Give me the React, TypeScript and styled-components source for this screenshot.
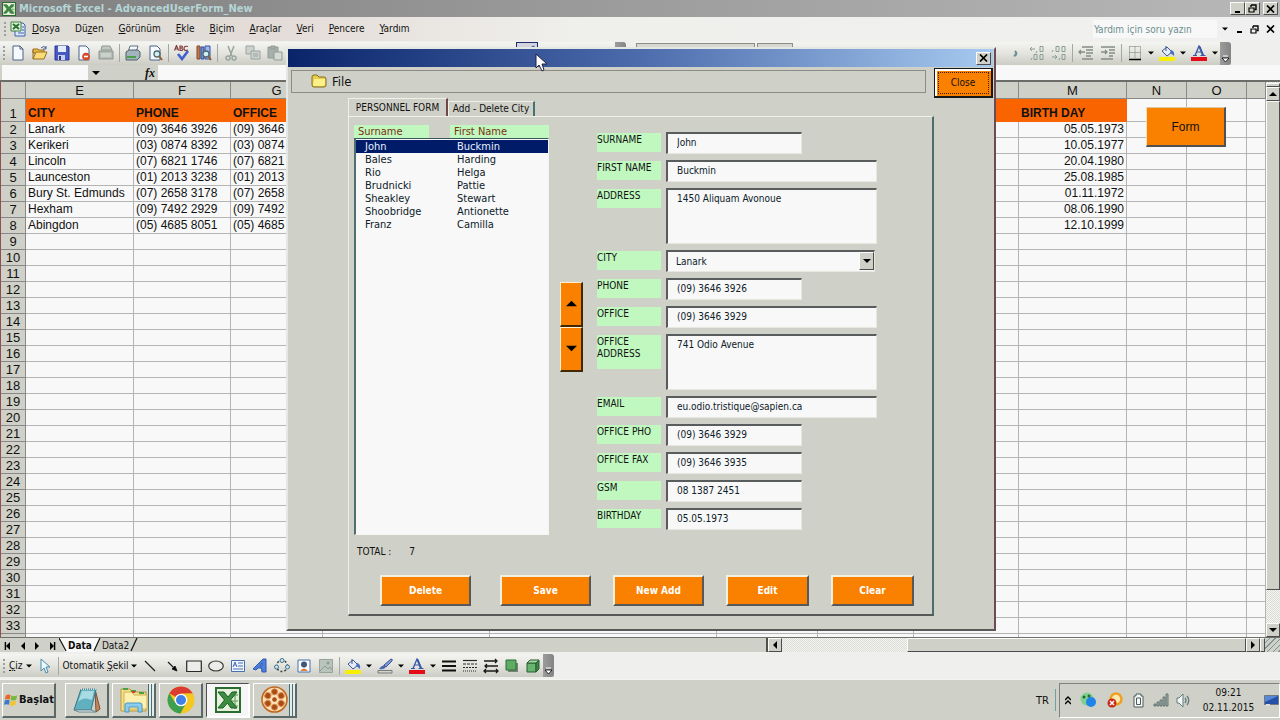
import React from "react";
import styled, { createGlobalStyle, css } from "styled-components";

const ui = `"DejaVu Sans Condensed", "Noto Sans", sans-serif`;
const face = "#cfd0c7";
const orange = "#fa8000";
const mint = "#c0f8c0";

const GlobalStyle = createGlobalStyle`
  * { box-sizing: border-box; }
  body { margin: 0; font-family: ${ui}; font-size: 10px; color: #111; background: ${face}; }
  button, input, select, textarea { font: inherit; color: inherit; margin: 0; }
  button { padding: 0; cursor: default; }
`;

const raised = css`
  border: 1px solid;
  border-color: #fbfbf8 #4c4c4c #4c4c4c #fbfbf8;
`;

const Desktop = styled.div`
  position: relative;
  display: flex;
  flex-direction: column;
  height: 100vh;
  min-height: 660px;
  overflow: hidden;
`;

/* ---------- application chrome ---------- */

const TitleBar = styled.header`
  display: flex;
  align-items: center;
  gap: 3px;
  height: 17px;
  flex: none;
  padding: 0 2px;
  background: linear-gradient(90deg, #808080, #9a9a9a 45%, #b8b8b8);
`;

const AppTitle = styled.h1`
  flex: 1;
  margin: 0;
  font-size: 11px;
  line-height: 16px;
  color: #b4d6d6;
`;

const CaptionButtons = styled.div`
  display: flex;
`;

const CaptionButton = styled.button<{ $apart?: boolean }>`
  ${raised}
  display: grid;
  place-items: center;
  width: 15px;
  height: 13px;
  margin-left: ${(p) => (p.$apart ? "3px" : "0")};
  background: ${face};
`;

const MenuBar = styled.nav`
  display: flex;
  align-items: center;
  gap: 15px;
  height: 24px;
  flex: none;
  padding: 0 2px 0 4px;
  background: linear-gradient(90deg, #dcdcd4, #e4dcd8 22%, #efefec 45%, #f0f0f0);
`;

const DocMark = styled.span`
  display: flex;
  align-items: center;
  gap: 2px;
  margin-right: -9px;
`;

const MenuItem = styled.button`
  border: 0;
  background: none;
  line-height: 16px;
  u { text-underline-offset: 1px; }
`;

const MenuEnd = styled.div`
  display: flex;
  align-items: center;
  margin-left: auto;
`;

const HelpBox = styled.input`
  width: 124px;
  height: 18px;
  border: 0;
  padding: 0 1px;
  background: #f8f8f8;
  &::placeholder { color: #6d8f8f; opacity: 1; }
`;

const PlainButton = styled.button<{ $w: number }>`
  display: grid;
  place-items: center;
  width: ${(p) => p.$w}px;
  height: 16px;
  border: 0;
  background: none;
`;

const Toolbar = styled.div<{ $tall?: boolean }>`
  display: flex;
  align-items: center;
  flex: none;
  height: ${(p) => (p.$tall ? 27 : 24)}px;
  background: #efefed;
`;

const ToolStrip = styled.div<{ $w?: number; $end?: boolean }>`
  display: flex;
  align-items: center;
  height: 23px;
  width: ${(p) => (p.$w ? `${p.$w}px` : "auto")};
  padding-left: ${(p) => (p.$end ? 0 : 3)}px;
  background: linear-gradient(#f4f4f1, #e4e4de 50%, #cbccc4);
`;

const Grip = styled.i`
  width: 4px;
  height: 14px;
  background: repeating-linear-gradient(#98a0a0 0 2px, transparent 2px 4px) 0 0 / 2px 100% no-repeat;
`;

const Tool = styled.button<{ $w?: number; $on?: boolean }>`
  display: grid;
  place-items: center;
  flex: none;
  width: ${(p) => p.$w ?? 22}px;
  height: 22px;
  border: 1px solid ${(p) => (p.$on ? "#1c2c6c" : "transparent")};
  background: ${(p) => (p.$on ? "#d4d4e0" : "none")};
`;

const TextTool = styled(Tool)`
  display: flex;
  align-items: center;
  gap: 3px;
  width: auto;
  padding: 0 1px;
`;

const Divider = styled.i`
  flex: none;
  width: 5px;
  height: 18px;
  border-left: 1px solid #a4a8a4;
  margin-left: 2px;
  margin-right: -2px;
`;

const Overflow = styled.button`
  display: grid;
  place-items: end center;
  flex: none;
  width: 11px;
  height: 23px;
  padding-bottom: 2px;
  border: 0;
  border-radius: 0 3px 3px 0;
  background: linear-gradient(90deg, #9c9c9c, #848484);
`;

const Gap = styled.i<{ $w: number }>`
  flex: none;
  width: ${(p) => p.$w}px;
`;

const ComboStub = styled.i<{ $w: number }>`
  flex: none;
  width: ${(p) => p.$w}px;
  height: 20px;
  margin-right: 2px;
  border: 1px solid #8c8c88;
  background: #d8d8d0;
`;

const FormulaBar = styled.div`
  display: flex;
  align-items: center;
  flex: none;
  height: 17px;
  padding-left: 2px;
  border-bottom: 2px solid #6c6c68;
  background: ${face};
`;

const NameBox = styled.input`
  width: 86px;
  height: 15px;
  border: 0;
  background: #f8f8f8;
`;

const FormulaInput = styled.input`
  flex: 1;
  height: 15px;
  border: 0;
  background: #f8f8f8;
`;

const Fx = styled.button`
  width: 54px;
  border: 0;
  padding-left: 38px;
  background: none;
  font: italic bold 12px/14px "Liberation Serif", serif;
`;

/* ---------- worksheet ---------- */

const SheetArea = styled.main`
  position: relative;
  display: flex;
  flex: 1;
  min-height: 0;
  overflow: hidden;
  background: #f8f8f8;
`;

const GridView = styled.div`
  flex: 1;
  min-width: 0;
  overflow: hidden;
`;

const Sheet = styled.table`
  table-layout: fixed;
  width: 100%;
  border-collapse: separate;
  border-spacing: 0;
  border-left: 1px solid #905050;
  font: 12px/15px "Liberation Sans", Arial, sans-serif;
  th, td {
    height: 16px;
    padding: 0 2px;
    border-right: 1px solid #b4b4b4;
    border-bottom: 1px solid #b4b4b4;
    overflow: hidden;
    white-space: nowrap;
  }
  thead th, tbody th {
    padding: 0;
    border-color: #888;
    background: ${face};
    font-size: 13px;
    font-weight: normal;
    text-align: center;
  }
  thead th { height: 17px; }
`;

const HeadCell = styled.td`
  && {
    height: 23px;
    border-color: #fa6400;
    background: #fa6400;
    font-weight: bold;
    vertical-align: bottom;
  }
`;

const RowLabel = styled.th`
  vertical-align: bottom;
`;

const Cell = styled.td<{ $right?: boolean }>`
  text-align: ${(p) => (p.$right ? "right" : "left")};
`;

const FormLauncher = styled.button`
  position: absolute;
  top: 25px;
  left: 1146px;
  width: 80px;
  height: 40px;
  border: 1px solid;
  border-color: #d8c8a0 #505050 #505050 #f0e0c0;
  border-width: 1px 2px 2px 1px;
  background: ${orange};
  font: 12px "Liberation Sans", Arial, sans-serif;
`;

const dither = css`
  background: repeating-conic-gradient(#f4f4f2 0 25%, #dcdcd6 0 50%) 0 0 / 2px 2px;
`;

const VScroll = styled.div`
  display: flex;
  flex-direction: column;
  width: 14px;
  padding-top: 1px;
  ${dither}
`;

const SplitBox = styled.i<{ $vertical?: boolean }>`
  ${raised}
  flex: none;
  background: ${face};
  width: ${(p) => (p.$vertical ? "5px" : "14px")};
  height: ${(p) => (p.$vertical ? "14px" : "4px")};
`;

const SizeGrip = styled.i`
  flex: none;
  width: 15px;
  background: repeating-linear-gradient(135deg, ${face} 0 3px, #7c9494 3px 4px);
`;

const ScrollButton = styled.button`
  ${raised}
  display: grid;
  place-items: center;
  flex: none;
  width: 14px;
  height: 14px;
  background: ${face};
`;

const Thumb = styled.i<{ $grow: number }>`
  ${raised}
  flex: ${(p) => p.$grow} 1 0;
  background: ${face};
`;

const Track = styled.i<{ $grow: number }>`
  flex: ${(p) => p.$grow} 1 0;
`;

const TabBar = styled.div`
  display: flex;
  align-items: stretch;
  flex: none;
  height: 15px;
  border-top: 1px solid #70706c;
  background: ${face};
`;

const TabNav = styled.div`
  display: flex;
  width: 59px;
  padding-left: 1px;
`;

const SheetTab = styled.button<{ $active?: boolean }>`
  border: 0;
  padding: 0 1px;
  background: ${(p) => (p.$active ? "#f8f8f8" : face)};
  font-weight: ${(p) => (p.$active ? "bold" : "normal")};
  line-height: 13px;
`;

const HScroll = styled.div`
  display: flex;
  flex: none;
  width: 40%;
  margin-left: auto;
  ${dither}
`;

const TabFill = styled.i`
  flex: 1;
  border-right: 2px solid #50504c;
`;

/* ---------- task bar ---------- */

const TaskBar = styled.footer`
  display: flex;
  align-items: center;
  gap: 3px;
  flex: none;
  height: 41px;
  padding: 0 0 0 2px;
  border-top: 1px solid #f4f4f0;
  background: ${face};
`;

const TaskButton = styled.button<{ $active?: boolean; $stack?: boolean }>`
  display: grid;
  place-items: center;
  width: 44px;
  height: 35px;
  border: 1px solid;
  border-width: 1px 2px 2px 1px;
  border-color: ${(p) => (p.$active ? "#505050 #fff #fff #505050" : "#fff #5c6868 #5c6868 #fff")};
  background: ${(p) => (p.$active ? "#f6f6f6" : face)};
  box-shadow: ${(p) => (p.$stack ? "inset -2px 0 #e4ecec, inset -3px 0 #487070, inset -5px 0 #e4ecec, inset -6px 0 #487070" : "none")};
`;

const StartButton = styled(TaskButton)`
  display: flex;
  align-items: center;
  gap: 1px;
  width: 54px;
  margin-right: 6px;
  padding-left: 1px;
  font-size: 11px;
  font-weight: bold;
`;

const Language = styled.button`
  margin-left: auto;
  width: 22px;
  height: 22px;
  border: 0;
  border-right: 1px solid #70a0a0;
  background: none;
  padding-right: 4px;
  font-size: 11px;
`;

const Tray = styled.div`
  display: flex;
  align-items: center;
  height: 35px;
  width: 221px;
  padding-left: 3px;
  border: 1px solid;
  border-color: #80807c #fff #fff #80807c;
`;

const TrayIcon = styled.button<{ $w: number }>`
  display: grid;
  place-items: center;
  width: ${(p) => p.$w}px;
  height: 24px;
  border: 0;
  background: none;
`;

const Clock = styled.time`
  flex: 1;
  line-height: 15px;
  text-align: center;
`;

/* ---------- personnel dialog ---------- */

const Dialog = styled.section`
  position: absolute;
  top: 47px;
  left: 286px;
  display: flex;
  flex-direction: column;
  width: 710px;
  height: 584px;
  border: 2px solid;
  border-color: #e4e8e4 #6c4c54 #585858 #e4e8e4;
  background: ${face};
`;

const DialogTitle = styled.div`
  display: flex;
  align-items: center;
  justify-content: flex-end;
  height: 18px;
  margin-right: 1px;
  padding-right: 2px;
  background: linear-gradient(90deg, #0a246a, #4c6cac 50%, #a6caf0);
`;

const DialogTop = styled.div`
  display: flex;
  align-items: flex-start;
  justify-content: space-between;
  padding: 1px 1px 0 3px;
`;

const FileMenu = styled.div`
  width: 635px;
  height: 23px;
  margin-top: 2px;
  padding-left: 19px;
  border: 1px solid #8c8c84;
`;

const FileButton = styled.button`
  display: flex;
  align-items: center;
  gap: 5px;
  height: 20px;
  border: 0;
  background: none;
  font-size: 13px;
`;

const CloseButton = styled.button`
  width: 59px;
  height: 30px;
  border: 2px solid #181818;
  border-width: 1px 2px 2px 1px;
  box-shadow: inset 1px 1px #fff, inset 2px 2px #fff;
  background: ${orange};
  outline: 1px dotted #402000;
  outline-offset: -5px;
`;

const Tabs = styled.div`
  display: flex;
  align-items: flex-end;
  height: 18px;
  margin-left: 60px;
`;

const Tab = styled.button<{ $active?: boolean }>`
  height: ${(p) => (p.$active ? 18 : 15)}px;
  width: ${(p) => (p.$active ? 100 : 87)}px;
  border: 1px solid;
  border-width: 1px 2px 0 1px;
  border-color: #f0f0e8 ${(p) => (p.$active ? "#704848" : "#487070")} transparent #f0f0e8;
  background: ${face};
  line-height: 14px;
  white-space: nowrap;
`;

const Page = styled.div`
  width: 586px;
  margin-left: 60px;
  height: 500px;
  padding: 8px 5px 0;
  border: 1px solid;
  border-width: 1px 2px 2px 1px;
  border-color: #f0f0e8 #4c6c6c #585858 #f0f0e8;
`;

const Columns = styled.div`
  display: flex;
  align-items: flex-start;
`;

const ListPane = styled.div`
  width: 195px;
  font-size: 11px;
`;

const ListHeads = styled.div`
  display: flex;
  justify-content: space-between;
`;

const ListHead = styled.span<{ $w: number }>`
  width: ${(p) => p.$w}px;
  height: 13px;
  padding-left: 4px;
  background: ${mint};
  color: #7c3010;
  line-height: 13px;
`;

const ListBox = styled.div`
  height: 397px;
  padding-top: 1px;
  border: 1px solid;
  border-width: 1px 1px 1px 2px;
  border-color: #385858 #f4f4f0 #f4f4f0 #507070;
  background: #f8f8f8;
`;

const ListTable = styled.table`
  width: 100%;
  border-collapse: collapse;
  table-layout: fixed;
  line-height: 13px;
  td { height: 13px; padding: 0 0 0 9px; }
`;

const ListRow = styled.tr<{ $selected?: boolean }>`
  background: ${(p) => (p.$selected ? "#001c68" : "none")};
  color: ${(p) => (p.$selected ? "#e8f0ff" : "#0c2028")};
`;

const Total = styled.p`
  display: flex;
  gap: 18px;
  margin: 0;
  padding: 10px 0 0 3px;
  font-size: 10px;
  line-height: 14px;
`;

const Spinner = styled.div`
  display: flex;
  flex-direction: column;
  margin: 157px 14px 0 11px;
`;

const SpinButton = styled.button`
  width: 23px;
  height: 45px;
  border: 1px solid;
  border-width: 1px 2px 2px 1px;
  border-color: #fff0d0 #402800 #402800 #fff0d0;
  background: ${orange};
`;

const Fields = styled.div`
  display: flex;
  flex-direction: column;
  gap: 6px;
  padding-top: 7px;
`;

const FieldRow = styled.div`
  display: flex;
  align-items: flex-start;
  gap: 5px;
`;

const FieldLabel = styled.label<{ $tall?: boolean }>`
  width: 64px;
  height: ${(p) => (p.$tall ? 34 : 19)}px;
  margin-top: 1px;
  padding-top: 1px;
  background: ${mint};
  line-height: 12px;
  white-space: pre-line;
`;

const sunken = css`
  border: 1px solid;
  border-width: 2px 1px 1px 2px;
  border-color: #585c5c #e8e8e0 #e8e8e0 #585c5c;
  background: #f8f8f8;
  color: #0c2028;
  outline: 0;
`;

const TextField = styled.input<{ $wide?: boolean }>`
  ${sunken}
  width: ${(p) => (p.$wide ? 211 : 136)}px;
  height: 22px;
  padding: 0 8px 2px 9px;
`;

const TextArea = styled.textarea`
  ${sunken}
  display: block;
  width: 211px;
  height: 56px;
  padding: 2px 8px 2px 9px;
  line-height: 14px;
  resize: none;
`;

const Combo = styled.div`
  display: grid;
  width: 209px;
  > * { grid-area: 1 / 1; }
`;

const ComboSelect = styled.select`
  ${sunken}
  appearance: none;
  height: 22px;
  padding: 0 8px 1px;
  border-radius: 0;
`;

const ComboArrow = styled.span`
  ${raised}
  display: grid;
  place-items: center;
  place-self: center end;
  width: 15px;
  height: 18px;
  margin-right: 1px;
  background: ${face};
  pointer-events: none;
`;

const Actions = styled.div`
  display: flex;
  gap: 22px;
  padding: 16px 0 0 26px;
`;

const Action = styled.button<{ $narrow?: boolean; $apart?: boolean }>`
  width: ${(p) => (p.$narrow ? 83 : 91)}px;
  height: 31px;
  margin-right: ${(p) => (p.$apart ? 7 : 0)}px;
  border: 2px solid;
  border-color: #f4f0e0 #585858 #585858 #f4f0e0;
  background: ${orange};
  color: #fff;
  font-weight: bold;
`;

const Pointer = styled.svg`
  position: absolute;
  top: 53px;
  left: 535px;
`;

/* ---------- drawings ---------- */

type DirProps = { dir: "up" | "down" | "left" | "right"; size?: number; bar?: boolean };

const Arrow = ({ dir, size = 8, bar }: DirProps) => {
  const turn = { down: 0, left: 90, up: 180, right: 270 }[dir];
  return (
    <svg width={size} height={size} viewBox="0 0 8 8" aria-hidden="true">
      <g transform={`rotate(${turn} 4 4)`}>
        <path d="M0 2h8L4 6z" fill="#000" />
        {bar && <path d="M0 6.600h8" stroke="#000" strokeWidth="1.400" />}
      </g>
    </svg>
  );
};

const Cross = () => (
  <svg width="9" height="8" viewBox="0 0 9 8"><path d="M1 0.500l7 7M8 0.500l-7 7" stroke="#000" strokeWidth="1.700" /></svg>
);
const Minimize = () => (
  <svg width="8" height="8" viewBox="0 0 8 8"><path d="M1 7h5" stroke="#000" strokeWidth="2" /></svg>
);
const Restore = () => (
  <svg width="9" height="9" viewBox="0 0 9 9" fill="none" stroke="#000">
    <path d="M3 1h5v4.500H6.500M3 1v2" strokeWidth="1.400" /><path d="M1 4h5v4H1z" strokeWidth="1.200" />
  </svg>
);

const ExcelMark = ({ size = 15 }: { size?: number }) => (
  <svg width={size} height={size} viewBox="0 0 26 26">
    <path d="M1 1h24v24H1z" fill="#e4f0dc" stroke="#2c6c30" strokeWidth="2" />
    <path d="M20 4v18M14 19h9M15 14h8M17 8h6" stroke="#7cb070" strokeWidth="1.500" />
    <path d="M3 5h6l4 5 4-5h5l-6.500 8L22 21h-6l-3.500-5L8 21H3l6.500-8z" fill="#3c8c40" stroke="#1c5c28" />
  </svg>
);

const SheetIcon = () => (
  <svg width="16" height="16" viewBox="0 0 16 16">
    <path d="M5 2h8l2 2v11H5z" fill="#dce8fc" stroke="#4060a8" />
    <path d="M8 12h6M12 9h2M12 6h2" stroke="#4060a8" />
    <path d="M1 1h10v9H1z" fill="#e0f0d8" stroke="#388040" /><path d="M3 3l6 5M9 3L3 8" stroke="#287030" strokeWidth="2" />
  </svg>
);

type Glyph =
  | "new" | "open" | "save" | "perm" | "mail" | "print" | "preview" | "spell" | "research" | "cut" | "copy" | "paste"
  | "comma" | "incDec" | "decDec" | "outdent" | "indent" | "borders" | "fill" | "fontColor" | "brush"
  | "select" | "line" | "arrow" | "rect" | "oval" | "textbox" | "wordart" | "cycle" | "clip" | "picture"
  | "lines" | "dashes" | "arrows" | "shadow" | "cube";

const page = <path d="M3 1h7l3 3v11H3z" fill="#f6faff" stroke="#4c6088" />;
const lens = (
  <>
    <circle cx="10" cy="9" r="3" fill="#d0f0f4" stroke="#50686c" strokeWidth="1.300" />
    <path d="M12 11l3 4" stroke="#906030" strokeWidth="2" />
  </>
);

const glyphs: Record<Glyph, React.ReactNode> = {
  new: <>{page}<path d="M10 1v3h3" fill="none" stroke="#4c6088" /></>,
  open: <><path d="M1 4h5l1 1h5v3H1z" fill="#e8b848" stroke="#98701c" /><path d="M1 14V5M1 14l3-7h11l-3 7z" fill="#fcdc78" stroke="#98701c" /><path d="M9 3q3-3 5 0m0-2v3h-3" fill="none" stroke="#405890" /></>,
  save: <><path d="M1 1h13l1 1v13H1z" fill="#4858c4" stroke="#283890" /><path d="M4 1h8v6H4z" fill="#e4ecfc" /><path d="M4 10h7v5H4z" fill="#c8d0ec" /><path d="M5 11h2v4H5z" fill="#283890" /></>,
  perm: <>{page}<circle cx="10" cy="11.500" r="3.800" fill="#d84828" /><path d="M8 11.500h4" stroke="#fff" strokeWidth="1.600" /></>,
  mail: <><path d="M4 1h8l2 4H3z" fill="#c0c8c4" stroke="#909890" /><path d="M1 6h14v8H1z" fill="#b4bcb8" stroke="#8c9490" /><path d="M3 9h10M3 11h10" stroke="#e0e4e0" /></>,
  print: <><path d="M5 1h8l-2 6H3z" fill="#f4f8ff" stroke="#607080" /><path d="M1 7l3-2h9l2 2v5l-3 3H1z" fill="#a4b4bc" stroke="#506068" /><path d="M2 12h9" stroke="#48a048" strokeWidth="2" /></>,
  preview: <>{page}{lens}</>,
  spell: <><path d="M.5 5.500L2.500.5l2 5M1.500 4h2M6 1v4.500h1.500q2.500-1 0-2.500H6h1.500q2-1 0-2zM14 1.500q-4-1-4 2t4 1.500" fill="none" stroke="#803838" strokeWidth="1.200" /><path d="M4 9l4 5 6-8" fill="none" stroke="#4060d0" strokeWidth="2.600" /></>,
  research: <><path d="M1 1h3v13H1z" fill="#c07850" stroke="#804828" /><path d="M5 2h3v12H5z" fill="#7090dc" stroke="#3050a0" /><path d="M9 1h5v13H9z" fill="#a0b8ec" stroke="#3050a0" />{lens}</>,
  cut: <g stroke="#98a4a0" fill="none" strokeWidth="1.500"><path d="M5 1l4 10M11 1L7 11" /><circle cx="5" cy="13" r="2" /><circle cx="11" cy="13" r="2" /></g>,
  copy: <g fill="#ccd2ce" stroke="#98a4a0"><path d="M1 1h8v8H1z" /><path d="M6 6h9v8H6z" /><path d="M8 9h5M8 11h5" /></g>,
  paste: <g fill="#a8b0ac" stroke="#909a96"><path d="M1 2h10v11H1z" /><path d="M4 1h4v3H4z" /><path d="M7 7h8v8H7z" fill="#d4dad6" /></g>,
  comma: <path d="M8 6q3 3-1 5" fill="none" stroke="#689090" strokeWidth="2.200" />,
  incDec: <g stroke="#8c9c98" fill="none"><path d="M1 4h5M3 2L1 4l2 2M8 6l-1 2M11 1.500h3v5h-3zM3 13l-1 2M5 9.500h3v5H5zM11 9.500h3v5h-3z" /></g>,
  decDec: <g stroke="#8c9c98" fill="none"><path d="M2 5l-1 2M5 1.500h3v5H5zM11 1.500h3v5h-3zM1 12h5M4 10l2 2-2 2M9 13l-1 2M11 9.500h3v5h-3z" /></g>,
  outdent: <g stroke="#848c88" fill="none" strokeWidth="1.300"><path d="M4 2h11M8 5h7M8 8h7M8 11h5M4 14h11M1 7h6M3 5L1 7l2 2" /></g>,
  indent: <g stroke="#848c88" fill="none" strokeWidth="1.300"><path d="M1 2h14M9 5h6M9 8h6M9 11h4M1 14h12M1 7h6M5 5l2 2-2 2" /></g>,
  borders: <><path d="M2.500 1.500h11v12M2.500 1.500v12M8 1.500v12M2.500 7.500h11" fill="none" stroke="#707874" strokeDasharray="1 1" /><path d="M2 14.500h12" stroke="#000" strokeWidth="1.500" /></>,
  fill: <><path d="M3 6l5-4 5 5-5 4z" fill="#e4ecf8" stroke="#405890" /><path d="M7 1v5" stroke="#405890" /><path d="M12 5q4 1 3 6-2-2-4-3z" fill="#4870c0" /><path d="M0 12h16v4H0z" fill="#f8f000" /></>,
  fontColor: <><path d="M4 10.500L8 1l4.500 9.500" fill="none" stroke="#3858a8" strokeWidth="1.300" /><path d="M8.500 1.500l3.500 9" stroke="#3858a8" strokeWidth="2" /><path d="M5.500 7h5M2 10.500h4M9.500 10.500h5" fill="none" stroke="#3858a8" /><path d="M0 12h16v4H0z" fill="#e40c18" /></>,
  brush: <><path d="M14 1q2 0 1 2l-6 6-2-2z" fill="#7c98d8" stroke="#405890" /><path d="M7 7l2 2q-2 3-7 2 2-3 5-4z" fill="#4868b0" /><path d="M1 12.500h14v2.500H1z" fill="#d4d4d0" stroke="#787c7c" /></>,
  select: <path d="M4 1v12l3-3 2 5 2-1-2-5h4z" fill="#e8f8ff" stroke="#4c88a8" />,
  line: <path d="M3 3l10 10" stroke="#202020" strokeWidth="1.300" />,
  arrow: <><path d="M4 4l7 7" stroke="#202020" strokeWidth="1.300" /><path d="M13 13l-5-2 3-3z" stroke="#202020" /></>,
  rect: <path d="M.7 3h14.600v10.500H.7z" fill="#ececea" stroke="#282828" strokeWidth="1.200" />,
  oval: <ellipse cx="8" cy="8" rx="7.300" ry="5" fill="#ececea" stroke="#383838" strokeWidth="1.200" />,
  textbox: <><path d="M1.500 2.500h13v11h-13z" fill="#f0f6ff" stroke="#4870b0" /><path d="M3 9l2-5 2 5M4 7h2M8 5h5M8 8h5M3 11h10" fill="none" stroke="#4870b0" /></>,
  wordart: <path d="M1 11L11 1h3v13h-4l-.5-4H6l-2 2zM8 8h2V5z" fill="#4c80dc" fillRule="evenodd" stroke="#2c58b0" />,
  cycle: <><circle cx="8" cy="8" r="5.500" fill="none" stroke="#384048" strokeWidth="1.500" strokeDasharray="2 2" /><g fill="#cce8f8" stroke="#407080"><circle cx="8" cy="2.500" r="2" /><circle cx="2.500" cy="9" r="2" /><circle cx="13.500" cy="9" r="2" /></g></>,
  clip: <><path d="M2 2h12v12H2z" fill="#fafcff" stroke="#4870b0" /><circle cx="8" cy="6.500" r="3" fill="#405878" /><path d="M4 13q4-5 8 0z" fill="#e08030" /></>,
  picture: <><path d="M1.500 1.500h13v13h-13z" fill="#b8c4bc" stroke="#98a49c" /><path d="M2 13l5-5 3 3 2-2 2 3" fill="none" stroke="#8c9c94" /><circle cx="10" cy="5" r="1.500" fill="#8c9c94" /></>,
  lines: <path d="M1 3.500h14M1 8h14M1 12.500h14" stroke="#101010" strokeWidth="2.200" />,
  dashes: <g stroke="#282828" strokeWidth="1.200"><path d="M1 2.500h14" /><path d="M1 6h14" strokeDasharray="3 1" /><path d="M1 9.500h14" strokeDasharray="2 1" /><path d="M1 13h14" strokeDasharray="1 1" /></g>,
  arrows: <g stroke="#181818" fill="none" strokeWidth="1.300"><path d="M1 3h13M12 1l2 2-2 2M2 8h13M4 6L2 8l2 2M1 13h14M3 11l-2 2 2 2M13 11l2 2-2 2" /></g>,
  shadow: <><path d="M4 5h10v9H4z" fill="#788478" /><path d="M2 2h10v10H2z" fill="#5cac64" stroke="#2c6c38" /></>,
  cube: <g stroke="#285c30"><path d="M2 5h9v9H2z" fill="#68b470" /><path d="M2 5l3-3h9l-3 3z" fill="#a4d8a4" /><path d="M11 5l3-3v9l-3 3z" fill="#3c8448" /></g>,
};

const Icon = ({ name, size = 16 }: { name: Glyph; size?: number }) => (
  <svg width={size} height={size} viewBox="0 0 16 16" aria-hidden="true">{glyphs[name]}</svg>
);

const Chevron = () => (
  <svg width="7" height="8" viewBox="0 0 7 8"><path d="M1 1h5" stroke="#fff" /><path d="M0 3h7L3.500 7z" fill="#fff" stroke="#000" strokeWidth=".8" /></svg>
);

const Folder = () => (
  <svg width="16" height="14" viewBox="0 0 16 14">
    <path d="M1 3q0-2 2-2h3l2 2h5q2 0 2 2v6q0 2-2 2H3q-2 0-2-2z" fill="#e8cc50" stroke="#84701c" />
    <path d="M3 5h11v5q0 2-2 2H3q-1 0-1-1z" fill="#fcf088" />
  </svg>
);

const Slant = ({ back }: { back?: boolean }) => (
  <svg width="8" height="14" viewBox="0 0 8 14" aria-hidden="true">
    <path d={back ? "M0 0h8v14H6z" : "M0 0h8L1 14H0z"} fill="#f8f8f8" />
    <path d={back ? "M0 0l7 13" : "M7 0L1 13"} stroke="#181818" strokeWidth="1.300" />
  </svg>
);
const EndSlant = () => (
  <svg width="8" height="14" viewBox="0 0 8 14" aria-hidden="true"><path d="M7 0L1 13" stroke="#181818" strokeWidth="1.300" /></svg>
);

const WindowsFlag = () => (
  <svg width="16" height="16" viewBox="0 0 16 16">
    <path d="M2 3q3-2 5.500-.5L6.500 7.500q-3-1.500-5.500 0z" fill="#e86828" />
    <path d="M8.500 3q3 1.500 6.500-.5l-1 5q-3 2-6.500.5z" fill="#78b838" />
    <path d="M1 8.500q3-1.500 5.500 0l-1 5q-3-1.500-5.500 0z" fill="#3c78d0" />
    <path d="M7.500 9q3 1.500 6.500-.5l-1 5q-3 2-6.500.5z" fill="#f4c430" />
  </svg>
);
const Notebook = () => (
  <svg width="28" height="28" viewBox="0 0 28 28">
    <path d="M22 3l5 20-4 3z" fill="#c88858" stroke="#705040" />
    <path d="M8 3h15l-5 21H1z" fill="#60b0c0" stroke="#387888" />
    <path d="M9 5h12l-2 9Q10 10 5 16z" fill="#a8dce4" />
    <path d="M1 24l17 0 5 2H6z" fill="#e8f0f0" stroke="#688890" />
    <path d="M8 3h15" stroke="#d0d8d8" strokeWidth="2" strokeDasharray="1 1" />
  </svg>
);
const Explorer = () => (
  <svg width="30" height="28" viewBox="0 0 30 28">
    <path d="M2 3h9l2 3h14v19H2z" fill="#f8e088" stroke="#b89838" />
    <path d="M5 6h8l2 3h13v14H5z" fill="#fcf0b0" stroke="#d0b050" />
    <path d="M4 3h5M12 5h5M20 7h5" stroke="#48a048" strokeWidth="2" />
    <path d="M13 6h3" stroke="#d04030" strokeWidth="2" />
    <path d="M6 26v-7q0-2 2-2h13q2 0 2 2v7h-4v-5h-9v5z" fill="#8cccec" stroke="#4898c8" />
  </svg>
);
const Chrome = () => (
  <svg width="28" height="28" viewBox="0 0 28 28">
    <circle cx="14" cy="14" r="13.500" fill="#f4c820" />
    <path d="M14 14L2.300 7.200A13.500 13.500 0 0 1 25.700 7.200L14 7.500z" fill="#dc3c30" />
    <path d="M14 14l-5.500 3.300L2.300 7.200A13.500 13.500 0 0 0 13.500 27.500L19 17z" fill="#3ca050" />
    <circle cx="14" cy="14" r="6.300" fill="#fff" /><circle cx="14" cy="14" r="5" fill="#4080e8" />
  </svg>
);
const Reel = () => (
  <svg width="27" height="27" viewBox="0 0 27 27">
    <circle cx="13.500" cy="13.500" r="12.500" fill="#fce0b8" stroke="#c06820" strokeWidth="1.600" />
    {[0, 60, 120, 180, 240, 300].map((a) => (
      <circle key={a} cx="13.500" cy="5.800" r="3" fill="#a84c14" stroke="#d88848" transform={`rotate(${a} 13.500 13.500)`} />
    ))}
    <circle cx="13.500" cy="13.500" r="2.300" fill="#a84c14" />
  </svg>
);

/* ---------- data ---------- */

type Column = { id: string; width?: number; covered?: boolean };

/* Letters of the columns that the dialog covers are left out. */
const columns: Column[] = [
  { id: "E", width: 108 }, { id: "F", width: 97 }, { id: "G", width: 92 },
  { id: "H", width: 167, covered: true }, { id: "I", width: 227, covered: true },
  { id: "J", width: 101, covered: true }, { id: "K", width: 96, covered: true },
  { id: "L", width: 105, covered: true },
  { id: "M", width: 108 }, { id: "N", width: 60 }, { id: "O", width: 60 }, { id: "P", covered: true },
];

const records = [
  ["Lanark", "(09) 3646 3926", "(09) 3646 3929", "05.05.1973"],
  ["Kerikeri", "(03) 0874 8392", "(03) 0874 8395", "10.05.1977"],
  ["Lincoln", "(07) 6821 1746", "(07) 6821 1749", "20.04.1980"],
  ["Launceston", "(01) 2013 3238", "(01) 2013 3241", "25.08.1985"],
  ["Bury St. Edmunds", "(07) 2658 3178", "(07) 2658 3181", "01.11.1972"],
  ["Hexham", "(09) 7492 2929", "(09) 7492 2932", "08.06.1990"],
  ["Abingdon", "(05) 4685 8051", "(05) 4685 8054", "12.10.1999"],
];

const people = [
  ["John", "Buckmin"], ["Bales", "Harding"], ["Rio", "Helga"], ["Brudnicki", "Pattie"],
  ["Sheakley", "Stewart"], ["Shoobridge", "Antionette"], ["Franz", "Camilla"],
];

type Field = { id: string; label: string; value: string; kind?: "wide" | "area" | "combo" };

const fields: Field[] = [
  { id: "surname", label: "SURNAME", value: "John" },
  { id: "first", label: "FIRST NAME", value: "Buckmin", kind: "wide" },
  { id: "address", label: "ADDRESS", value: "1450 Aliquam Avonoue", kind: "area" },
  { id: "city", label: "CITY", value: "Lanark", kind: "combo" },
  { id: "phone", label: "PHONE", value: "(09) 3646 3926" },
  { id: "office", label: "OFFICE", value: "(09) 3646 3929", kind: "wide" },
  { id: "office-address", label: "OFFICE\nADDRESS", value: "741 Odio Avenue", kind: "area" },
  { id: "email", label: "EMAIL", value: "eu.odio.tristique@sapien.ca", kind: "wide" },
  { id: "office-phone", label: "OFFICE PHO", value: "(09) 3646 3929" },
  { id: "office-fax", label: "OFFICE FAX", value: "(09) 3646 3935" },
  { id: "gsm", label: "GSM", value: "08 1387 2451" },
  { id: "birthday", label: "BIRTHDAY", value: "05.05.1973" },
];

const menus: [string, string, string][] = [
  ["", "D", "osya"], ["Dü", "z", "en"], ["", "G", "örünüm"], ["", "E", "kle"], ["", "B", "içim"],
  ["", "A", "raçlar"], ["", "V", "eri"], ["", "P", "encere"], ["", "Y", "ardım"],
];

const Tools = ({ names, w }: { names: Glyph[]; w?: number }) => (
  <>{names.map((n) => <Tool key={n} $w={w} aria-label={n}><Icon name={n} /></Tool>)}</>
);

const DropTool = ({ name }: { name: Glyph }) => (
  <>
    <Tool aria-label={name}><Icon name={name} /></Tool>
    <Tool $w={10} aria-label={`${name} options`}><Arrow dir="down" size={6} /></Tool>
  </>
);

const FieldControl = ({ field }: { field: Field }) => {
  if (field.kind === "area") return <TextArea id={field.id} defaultValue={field.value} />;
  if (field.kind === "combo")
    return (
      <Combo>
        <ComboSelect id={field.id} defaultValue={field.value}>
          {records.map(([city]) => <option key={city}>{city}</option>)}
        </ComboSelect>
        <ComboArrow><Arrow dir="down" /></ComboArrow>
      </Combo>
    );
  return <TextField id={field.id} $wide={field.kind === "wide"} defaultValue={field.value} />;
};

const Worksheet = () => (
  <SheetArea>
    <GridView>
      <Sheet>
        <colgroup>
          <col style={{ width: 25 }} />
          {columns.map(({ id, width }) => <col key={id} style={{ width }} />)}
        </colgroup>
        <thead>
          <tr><th />{columns.map(({ id, covered }) => <th key={id}>{covered ? "" : id}</th>)}</tr>
        </thead>
        <tbody>
          <tr>
            <RowLabel>1</RowLabel>
            {["CITY", "PHONE", "OFFICE", "", "", "", "", "", "BIRTH DAY"].map((t, i) => <HeadCell key={i}>{t}</HeadCell>)}
            <td /><td /><td />
          </tr>
          {Array.from({ length: 33 }, (_, r) => {
            const rec = records[r];
            return (
              <tr key={r}>
                <RowLabel>{r + 2}</RowLabel>
                {columns.map(({ id }, c) => (
                  <Cell key={id} $right={c === 8}>{rec ? (c < 3 ? rec[c] : c === 8 ? rec[3] : "") : ""}</Cell>
                ))}
              </tr>
            );
          })}
        </tbody>
      </Sheet>
    </GridView>
    <VScroll>
      <SplitBox />
      <ScrollButton aria-label="Scroll up"><Arrow dir="up" /></ScrollButton>
      <Thumb $grow={487} />
      <Track $grow={33} />
      <ScrollButton aria-label="Scroll down"><Arrow dir="down" /></ScrollButton>
    </VScroll>
    <FormLauncher>Form</FormLauncher>
  </SheetArea>
);

const PersonnelDialog = () => (
  <Dialog role="dialog" aria-label="Personnel form">
    <DialogTitle><CaptionButton aria-label="Close window"><Cross /></CaptionButton></DialogTitle>
    <DialogTop>
      <FileMenu><FileButton><Folder />File</FileButton></FileMenu>
      <CloseButton>Close</CloseButton>
    </DialogTop>
    <Tabs role="tablist">
      <Tab role="tab" $active>PERSONNEL FORM</Tab>
      <Tab role="tab">Add - Delete City</Tab>
    </Tabs>
    <Page>
      <Columns>
        <ListPane>
          <ListHeads><ListHead $w={75}>Surname</ListHead><ListHead $w={99}>First Name</ListHead></ListHeads>
          <ListBox>
            <ListTable>
              <colgroup><col style={{ width: 92 }} /><col /></colgroup>
              <tbody>
                {people.map(([last, first], i) => (
                  <ListRow key={last} $selected={i === 0}><td>{last}</td><td>{first}</td></ListRow>
                ))}
              </tbody>
            </ListTable>
          </ListBox>
          <Total><span>TOTAL :</span><output>7</output></Total>
        </ListPane>
        <Spinner>
          <SpinButton aria-label="Previous"><Arrow dir="up" size={11} /></SpinButton>
          <SpinButton aria-label="Next"><Arrow dir="down" size={11} /></SpinButton>
        </Spinner>
        <Fields>
          {fields.map((f) => (
            <FieldRow key={f.id}>
              <FieldLabel htmlFor={f.id} $tall={f.label.includes("\n")}>{f.label}</FieldLabel>
              <FieldControl field={f} />
            </FieldRow>
          ))}
        </Fields>
      </Columns>
      <Actions>
        <Action $apart>Delete</Action>
        <Action>Save</Action>
        <Action>New Add</Action>
        <Action $narrow>Edit</Action>
        <Action $narrow>Clear</Action>
      </Actions>
    </Page>
  </Dialog>
);

export default function App() {
  return (
    <Desktop>
      <GlobalStyle />
      <TitleBar>
        <ExcelMark size={14} />
        <AppTitle>Microsoft Excel - AdvancedUserForm_New</AppTitle>
        <CaptionButtons>
          <CaptionButton aria-label="Minimize"><Minimize /></CaptionButton>
          <CaptionButton aria-label="Restore"><Restore /></CaptionButton>
          <CaptionButton $apart aria-label="Close"><Cross /></CaptionButton>
        </CaptionButtons>
      </TitleBar>
      <MenuBar>
        <DocMark><Grip /><SheetIcon /></DocMark>
        {menus.map(([a, b, c]) => <MenuItem key={b + c}>{a}<u>{b}</u>{c}</MenuItem>)}
        <MenuEnd>
          <HelpBox aria-label="Help" placeholder="Yardım için soru yazın" />
          <PlainButton $w={16} aria-label="Help options"><Arrow dir="down" size={6} /></PlainButton>
          <PlainButton $w={14} aria-label="Minimize workbook"><Minimize /></PlainButton>
          <PlainButton $w={15} aria-label="Restore workbook"><Restore /></PlainButton>
          <PlainButton $w={16} aria-label="Close workbook"><Cross /></PlainButton>
        </MenuEnd>
      </MenuBar>
      <Toolbar>
        <ToolStrip $w={615}>
          <Grip />
          <Tools names={["new", "open", "save", "perm", "mail"]} /><Divider />
          <Tools names={["print", "preview"]} /><Divider />
          <Tools names={["spell", "research"]} /><Divider />
          <Tools names={["cut", "copy", "paste"]} />
          <Gap $w={230} />
          <Tool $on aria-label="Drawing"><Icon name="brush" /></Tool>
        </ToolStrip>
        <Overflow aria-label="More buttons" />
        <Gap $w={10} />
        <ToolStrip $w={595} $end>
          <ComboStub $w={119} /><ComboStub $w={36} />
          <Gap $w={209} />
          <Tools names={["comma", "incDec", "decDec"]} /><Divider />
          <Tools names={["outdent", "indent"]} /><Divider />
          <DropTool name="borders" /><DropTool name="fill" /><DropTool name="fontColor" />
          <Overflow aria-label="More formatting"><Chevron /></Overflow>
        </ToolStrip>
      </Toolbar>
      <FormulaBar>
        <NameBox aria-label="Name box" />
        <PlainButton $w={16} aria-label="Names"><Arrow dir="down" /></PlainButton>
        <Fx>fx</Fx>
        <FormulaInput aria-label="Formula" />
      </FormulaBar>
      <Worksheet />
      <TabBar>
        <TabNav>
          <PlainButton $w={14} aria-label="First sheet"><Arrow dir="left" bar /></PlainButton>
          <PlainButton $w={15} aria-label="Previous sheet"><Arrow dir="left" /></PlainButton>
          <PlainButton $w={14} aria-label="Next sheet"><Arrow dir="right" /></PlainButton>
          <PlainButton $w={15} aria-label="Last sheet"><Arrow dir="right" bar /></PlainButton>
        </TabNav>
        <Slant back />
        <SheetTab $active>Data</SheetTab>
        <Slant />
        <SheetTab>Data2</SheetTab>
        <EndSlant />
        <TabFill />
        <HScroll>
          <ScrollButton aria-label="Scroll left"><Arrow dir="left" /></ScrollButton>
          <Track $grow={126} />
          <Thumb $grow={341} />
          <ScrollButton aria-label="Scroll right"><Arrow dir="right" /></ScrollButton>
          <SplitBox $vertical />
          <SizeGrip />
        </HScroll>
      </TabBar>
      <Toolbar $tall>
        <ToolStrip>
          <Grip />
          <TextTool><span><u>Ç</u>iz</span><Arrow dir="down" size={6} /></TextTool>
          <Tools names={["select"]} /><Divider />
          <TextTool><span>Otomatik <u>Ş</u>ekil</span><Arrow dir="down" size={6} /></TextTool>
          <Tools names={["line", "arrow", "rect", "oval", "textbox", "wordart", "cycle", "clip", "picture"]} /><Divider />
          <DropTool name="fill" /><DropTool name="brush" /><DropTool name="fontColor" />
          <Tools w={21} names={["lines", "dashes", "arrows", "shadow", "cube"]} />
          <Overflow aria-label="More drawing tools"><Chevron /></Overflow>
        </ToolStrip>
      </Toolbar>
      <TaskBar>
        <StartButton><WindowsFlag />Başlat</StartButton>
        <TaskButton aria-label="Notes"><Notebook /></TaskButton>
        <TaskButton $stack aria-label="Explorer"><Explorer /></TaskButton>
        <TaskButton aria-label="Browser"><Chrome /></TaskButton>
        <TaskButton $active aria-label="Excel"><ExcelMark size={26} /></TaskButton>
        <TaskButton $stack aria-label="Recorder"><Reel /></TaskButton>
        <Language>TR</Language>
        <Tray>
          <TrayIcon $w={9} aria-label="Show hidden icons">
            <svg width="6" height="9" viewBox="0 0 6 9" fill="none" stroke="#000" strokeWidth="1.400"><path d="M0 4l3-3 3 3M0 8l3-3 3 3" /></svg>
          </TrayIcon>
          <TrayIcon $w={32} aria-label="Messenger">
            <svg width="17" height="16" viewBox="0 0 17 16"><circle cx="7" cy="7" r="6.500" fill="#80d090" /><circle cx="4" cy="5" r="1.500" fill="#286838" /><circle cx="9" cy="4" r="1.500" fill="#286838" /><circle cx="11" cy="10" r="5" fill="#2084e8" /></svg>
          </TrayIcon>
          <TrayIcon $w={22} aria-label="Security">
            <svg width="16" height="16" viewBox="0 0 16 16"><circle cx="9" cy="7" r="5.500" fill="#fce8b0" stroke="#f0a020" strokeWidth="2.500" /><circle cx="5" cy="11" r="4.500" fill="#c82818" /><path d="M3 9l4 4M7 9l-4 4" stroke="#fff" strokeWidth="1.500" /></svg>
          </TrayIcon>
          <TrayIcon $w={24} aria-label="Battery">
            <svg width="11" height="15" viewBox="0 0 11 15"><path d="M3 1h5v2h2v11H1V3h2z" fill="#f8f8f8" stroke="#485c5c" /><path d="M3.500 5h4v6.500h-4z" fill="none" stroke="#485c5c" /></svg>
          </TrayIcon>
          <TrayIcon $w={22} aria-label="Network">
            <svg width="16" height="14" viewBox="0 0 16 14" fill="#a4b4b0" stroke="#506460" strokeWidth=".8"><path d="M1 11h2v2H1zM4 9h2v4H4zM7 7h2v6H7zM10 4h2v9h-2zM13 1h2v12h-2z" /></svg>
          </TrayIcon>
          <TrayIcon $w={22} aria-label="Volume">
            <svg width="15" height="15" viewBox="0 0 15 15" fill="none" stroke="#607c7c"><path d="M1 5h2l4-4v13l-4-4H1z" fill="#f4f8f8" /><path d="M9 5q2 2.500 0 5M11 3q3.500 4.500 0 9" strokeWidth="1.300" /></svg>
          </TrayIcon>
          <Clock>09:21<br />02.11.2015</Clock>
          <TrayIcon $w={16} aria-label="Display">
            <svg width="15" height="13" viewBox="0 0 15 13"><path d="M.5 1.500h14v9H.5z" fill="#2450a8" stroke="#707880" /><path d="M1 2h13L1 8z" fill="#5888d8" /><path d="M2 11h4" stroke="#ddd" strokeWidth="2" /></svg>
          </TrayIcon>
        </Tray>
      </TaskBar>
      <PersonnelDialog />
      <Pointer width="13" height="19" viewBox="0 0 13 19" aria-hidden="true">
        <path d="M1 1v14l3-3 3 6 2-1-2-6h5z" fill="#fff" stroke="#202040" />
      </Pointer>
    </Desktop>
  );
}
